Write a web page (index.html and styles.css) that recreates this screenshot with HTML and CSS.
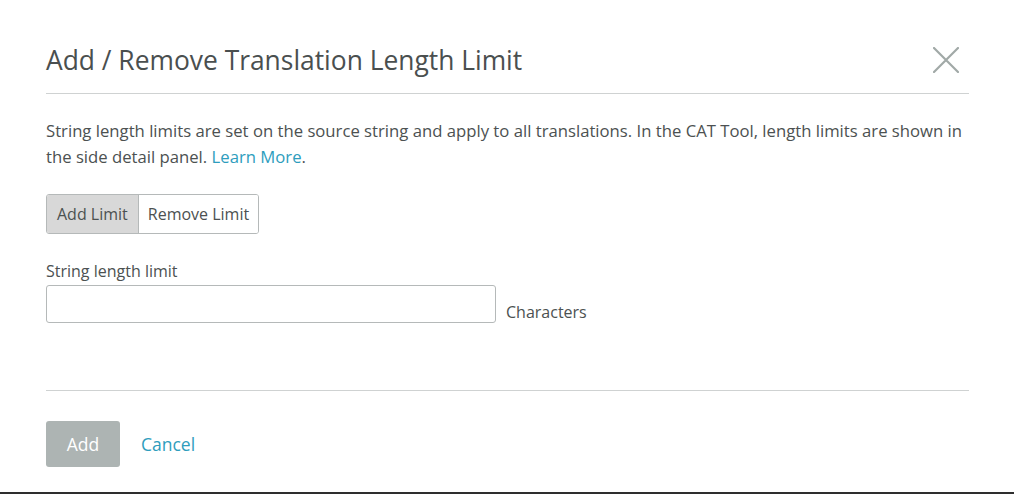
FILE: index.html
```html
<!DOCTYPE html>
<html>
<head>
<meta charset="utf-8">
<link rel="stylesheet" href="styles.css">
</head>
<body>
<div class="modal">
  <div class="header">
    <h1 class="title">Add / Remove Translation Length Limit</h1>
    <button class="close" aria-label="Close">
      <svg width="26" height="26" viewBox="0 0 26 26"><path d="M1 1 L25 25 M25 1 L1 25" stroke="#a1a9a7" stroke-width="2.2" stroke-linecap="round" fill="none"/></svg>
    </button>
  </div>
  <div class="body">
    <p class="desc">String length limits are set on the source string and apply to all translations. In the CAT Tool, length limits are shown in the side detail panel. <a href="#" class="link">Learn More</a>.</p>
    <div class="segment">
      <button class="seg seg-active">Add Limit</button>
      <button class="seg seg-right">Remove Limit</button>
    </div>
    <label class="label">String length limit</label>
    <div class="field-row">
      <input class="input" type="text">
      <span class="unit">Characters</span>
    </div>
  </div>
  <div class="footer">
    <button class="btn-add">Add</button>
    <a href="#" class="cancel">Cancel</a>
  </div>
</div>
</body>
</html>
```
FILE: styles.css
```css
html, body {
  margin: 0;
  padding: 0;
  background: #fff;
}
body {
  font-family: "Open Sans", "Noto Sans", sans-serif;
  color: #4c5151;
}
.modal {
  width: 1014px;
  height: 492px;
  box-sizing: content-box;
  border-bottom: 2px solid #2e2e2e;
  display: flex;
  flex-direction: column;
}
.header {
  margin: 0 45px 0 46px;
  padding-top: 42px;
  padding-bottom: 15px;
  border-bottom: 1px solid #cfd2d2;
  display: flex;
  align-items: center;
  justify-content: space-between;
}
.title {
  margin: 0;
  font-size: 26.4px;
  font-weight: 400;
  line-height: 36px;
  color: #4a4f4f;
}
.close {
  border: 0;
  background: none;
  padding: 0;
  margin-right: 10px;
  width: 26px;
  height: 26px;
  display: flex;
}
.body {
  margin: 0 45px 0 46px;
  padding-top: 24px;
  height: 272px;
  border-bottom: 1px solid #cfd2d2;
  display: flex;
  flex-direction: column;
  align-items: flex-start;
}
.desc {
  margin: 0;
  font-size: 16.7px;
  line-height: 26px;
}
.link {
  color: #2e9dbd;
  text-decoration: none;
}
.segment {
  margin-top: 24px;
  display: flex;
  border: 1px solid #b5b9b9;
  border-radius: 3px;
  overflow: hidden;
}
.seg {
  font-family: inherit;
  font-size: 16px;
  color: #4c5151;
  background: #fff;
  border: 0;
  height: 38px;
  padding: 0 10px;
}
.seg-right {
  padding: 0 9px;
}
.seg-active {
  background: #d8d8d8;
  border-right: 1px solid #b5b9b9;
}
.label {
  margin-top: 27px;
  font-size: 16px;
  line-height: 20px;
}
.field-row {
  margin-top: 4px;
  display: flex;
  align-items: flex-end;
  gap: 10px;
}
.input {
  width: 450px;
  height: 38px;
  box-sizing: border-box;
  border: 1px solid #b5b9b9;
  border-radius: 3px;
  margin: 0;
}
.unit {
  font-size: 16px;
  line-height: 20px;
  padding-bottom: 1px;
}
.footer {
  margin: 0 45px 0 46px;
  padding-top: 30px;
  display: flex;
  align-items: center;
  gap: 21px;
}
.btn-add {
  width: 74px;
  height: 46px;
  border: 0;
  border-radius: 3px;
  background: #adb4b3;
  color: #fff;
  font-family: inherit;
  font-size: 17.5px;
}
.cancel {
  color: #2e9dbd;
  text-decoration: none;
  font-size: 17.5px;
}
```
